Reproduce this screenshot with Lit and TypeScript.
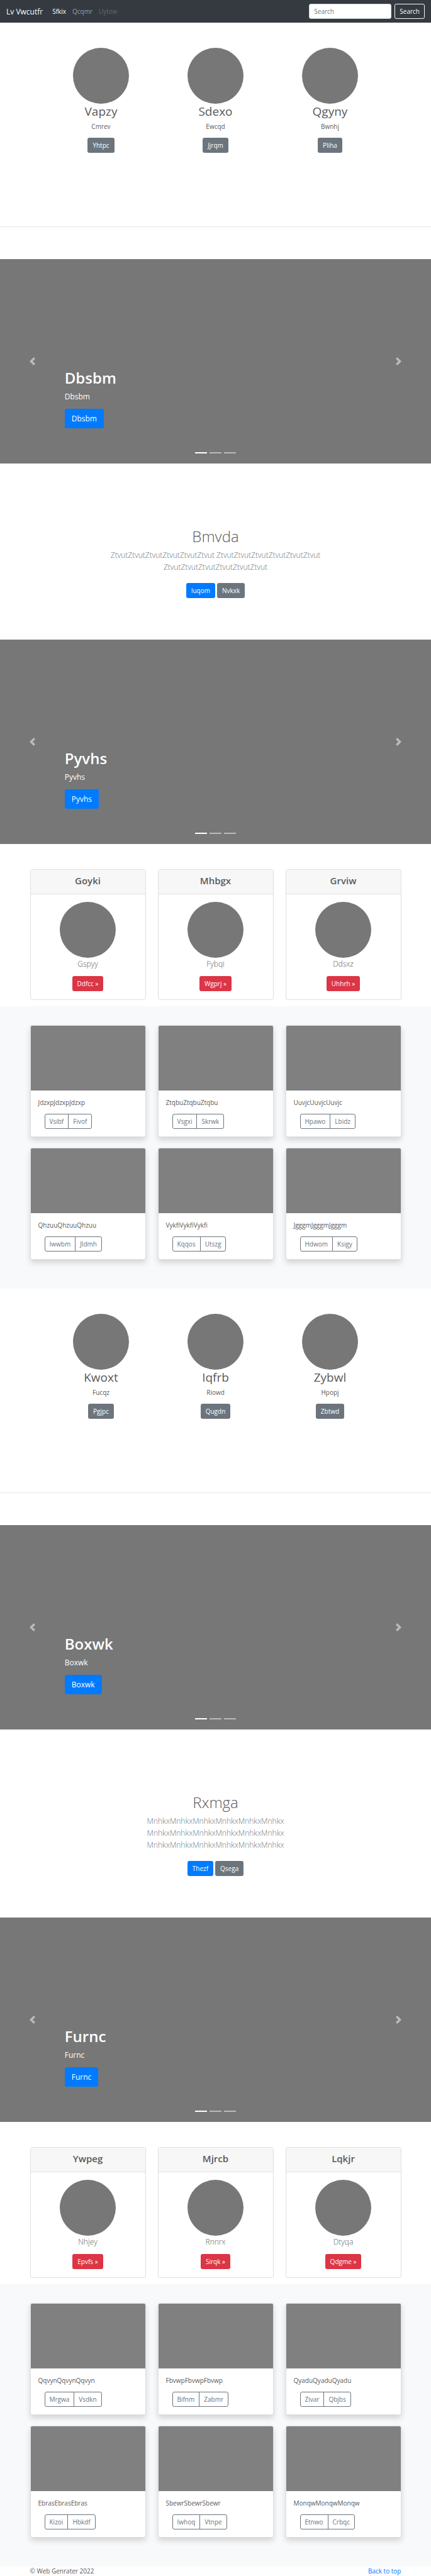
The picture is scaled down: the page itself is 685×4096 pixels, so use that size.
import { LitElement, html, css } from "lit";
import { customElement, property } from "lit/decorators.js";

const base = css`
  :host {
    display: block;
    font-family: "Open Sans", "Noto Sans", sans-serif;
    font-size: 10px;
    line-height: 15px;
    color: #5a5a5a;
  }
  *,
  *::before {
    box-sizing: border-box;
  }
  h1,
  h2,
  h4,
  p {
    margin: 0;
  }
  .btn {
    display: inline-block;
    padding: 4px 7px;
    border: 1px solid transparent;
    border-radius: 3px;
    background: transparent;
    color: #fff;
    font: inherit;
    line-height: 14px;
    text-decoration: none;
    cursor: pointer;
  }
  .primary {
    background: #007bff;
  }
  .secondary {
    background: #6c757d;
  }
  .danger {
    background: #dc3545;
  }
  .circle {
    width: 89px;
    height: 89px;
    border-radius: 50%;
    background: #777;
  }
`;

@customElement("site-nav")
export class SiteNav extends LitElement {
  static styles = [
    base,
    css`
      .bar {
        display: flex;
        align-items: center;
        padding: 6px 10px;
        background: #343a40;
      }
      a {
        text-decoration: none;
        color: rgba(255, 255, 255, 0.5);
      }
      .brand {
        margin-right: 15px;
        font-size: 12px;
        color: #fff;
      }
      .links {
        display: flex;
        gap: 10px;
        flex: 1;
      }
      .links .active {
        color: #fff;
      }
      .links .disabled {
        color: rgba(255, 255, 255, 0.25);
      }
      form {
        display: flex;
        gap: 5px;
      }
      input {
        width: 131px;
        height: 24px;
        padding: 4px 7px;
        border: 1px solid #ced4da;
        border-radius: 3px;
        background: #fff;
        color: #495057;
        font: inherit;
      }
      input::placeholder {
        color: #6c757d;
        opacity: 1;
      }
      .outline {
        border-color: #f8f9fa;
      }
    `,
  ];

  render() {
    return html`<nav class="bar">
      <a class="brand" href="#">Lv Vwcutfr</a>
      <div class="links">
        <a class="active" href="#">Sfkix</a>
        <a href="#">Qcqmr</a>
        <a class="disabled" href="#" aria-disabled="true">Uytew</a>
      </div>
      <form>
        <input type="text" placeholder="Search" aria-label="Search" />
        <button class="btn outline" type="button">Search</button>
      </form>
    </nav>`;
  }
}

@customElement("feature-trio")
export class FeatureTrio extends LitElement {
  @property({ attribute: false }) items: string[][] = [];

  static styles = [
    base,
    css`
      .trio {
        display: grid;
        grid-template-columns: repeat(3, 1fr);
        max-width: 546px;
        margin: 0 auto;
        padding: 40px 0 117px;
      }
      .item {
        display: flex;
        flex-direction: column;
        align-items: center;
      }
      h2 {
        margin-bottom: 5px;
        font-size: 19px;
        line-height: 24px;
        font-weight: 400;
      }
      p {
        margin-bottom: 10px;
      }
      hr {
        margin: 0 0 51px;
        border: 0;
        border-top: 1px solid #e6e6e6;
      }
    `,
  ];

  render() {
    return html`<div class="trio">
        ${this.items.map(
          ([title, text, action]) => html`<div class="item">
            <div class="circle"></div>
            <h2>${title}</h2>
            <p>${text}</p>
            <a class="btn secondary" href="#">${action}</a>
          </div>`
        )}
      </div>
      <hr />`;
  }
}

@customElement("slide-show")
export class SlideShow extends LitElement {
  @property() label = "";

  static styles = [
    base,
    css`
      .slide {
        position: relative;
        display: flex;
        flex-direction: column;
        justify-content: flex-end;
        height: 325px;
        padding: 0 15% 56px;
        background: #777;
        color: #fff;
      }
      .caption {
        display: flex;
        flex-direction: column;
        align-items: flex-start;
      }
      h1 {
        margin-bottom: 5px;
        font-size: 24px;
        line-height: 30px;
        font-weight: 600;
      }
      p {
        margin-bottom: 10px;
        font-size: 12px;
        line-height: 19px;
      }
      .large {
        padding: 5px 10px;
        font-size: 12px;
        line-height: 19px;
      }
      .control {
        position: absolute;
        top: 0;
        bottom: 0;
        width: 15%;
        display: flex;
        align-items: center;
        justify-content: center;
        padding: 0;
        border: 0;
        background: none;
        opacity: 0.5;
        cursor: pointer;
      }
      .prev {
        left: 0;
      }
      .next {
        right: 0;
      }
      svg {
        width: 13px;
        height: 13px;
        fill: #fff;
      }
      .dots {
        position: absolute;
        left: 0;
        right: 0;
        bottom: 16px;
        display: flex;
        justify-content: center;
        gap: 4px;
      }
      .dot {
        width: 19px;
        height: 2px;
        padding: 0;
        border: 0;
        background: #fff;
        opacity: 0.5;
      }
      .current {
        opacity: 1;
      }
    `,
  ];

  render() {
    return html`<section class="slide">
      <div class="caption">
        <h1>${this.label}</h1>
        <p>${this.label}</p>
        <a class="btn primary large" href="#">${this.label}</a>
      </div>
      <button class="control prev" aria-label="Previous">
        <svg viewBox="0 0 8 8">
          <path d="M5.25 0l-4 4 4 4 1.5-1.5-2.5-2.5 2.5-2.5-1.5-1.5z" />
        </svg>
      </button>
      <button class="control next" aria-label="Next">
        <svg viewBox="0 0 8 8">
          <path d="M2.75 0l-1.5 1.5 2.5 2.5-2.5 2.5 1.5 1.5 4-4-4-4z" />
        </svg>
      </button>
      <div class="dots">
        <button class="dot current" aria-label="Slide 1"></button>
        <button class="dot" aria-label="Slide 2"></button>
        <button class="dot" aria-label="Slide 3"></button>
      </div>
    </section>`;
  }
}

@customElement("intro-block")
export class IntroBlock extends LitElement {
  @property() heading = "";
  @property() word = "";
  @property({ attribute: false }) actions: string[] = [];

  static styles = [
    base,
    css`
      .intro {
        max-width: 387px;
        margin: 0 auto;
        padding: 101px 0 66px;
        text-align: center;
      }
      h1 {
        margin-bottom: 5px;
        font-size: 24px;
        line-height: 30px;
        font-weight: 300;
      }
      p {
        margin-bottom: 16px;
        font-size: 12px;
        line-height: 19px;
        font-weight: 300;
        color: #6c757d;
      }
      .actions {
        display: flex;
        justify-content: center;
        gap: 3px;
      }
    `,
  ];

  render() {
    const chunk = this.word.repeat(6);
    return html`<section class="intro">
      <h1>${this.heading}</h1>
      <p>${[chunk, chunk, chunk].join(" ")}</p>
      <div class="actions">
        <a class="btn primary" href="#">${this.actions[0]}</a>
        <a class="btn secondary" href="#">${this.actions[1]}</a>
      </div>
    </section>`;
  }
}

@customElement("plan-deck")
export class PlanDeck extends LitElement {
  @property({ attribute: false }) items: string[][] = [];

  static styles = [
    base,
    css`
      .deck {
        display: grid;
        grid-template-columns: repeat(3, 1fr);
        gap: 19px;
        max-width: 590px;
        margin: 0 auto;
        padding: 40px 0 10px;
      }
      .card {
        border: 1px solid #dfdfdf;
        border-radius: 3px;
        background: #fff;
        text-align: center;
      }
      h4 {
        padding: 8px 13px 12px;
        border-bottom: 1px solid #dfdfdf;
        background: #f7f7f7;
        font-size: 15px;
        line-height: 18px;
        font-weight: 600;
      }
      .body {
        display: flex;
        flex-direction: column;
        align-items: center;
        padding: 12px 13px 13px;
      }
      p {
        margin-bottom: 10px;
        font-size: 12px;
        line-height: 19px;
        font-weight: 300;
      }
    `,
  ];

  render() {
    return html`<div class="deck">
      ${this.items.map(
        ([title, text, action]) => html`<div class="card">
          <h4>${title}</h4>
          <div class="body">
            <div class="circle"></div>
            <p>${text}</p>
            <a class="btn danger" href="#">${action} »</a>
          </div>
        </div>`
      )}
    </div>`;
  }
}

@customElement("photo-album")
export class PhotoAlbum extends LitElement {
  @property({ attribute: false }) items: string[][] = [];

  static styles = [
    base,
    css`
      .album {
        padding: 30px 0 46px;
        background: #f8f9fa;
      }
      .grid {
        display: grid;
        grid-template-columns: repeat(3, 1fr);
        gap: 17px 19px;
        max-width: 590px;
        margin: 0 auto;
      }
      .card {
        border: 1px solid #dfdfdf;
        border-radius: 3px;
        background: #fff;
        box-shadow: 0 5px 10px rgba(0, 0, 0, 0.15);
      }
      .photo {
        height: 103px;
        border-radius: 2px 2px 0 0;
        background: #808080;
      }
      .body {
        padding: 12px;
      }
      p {
        margin-bottom: 10px;
      }
      .group {
        display: flex;
        margin-left: 10px;
      }
      .group .btn {
        border-color: #6c757d;
        color: #6c757d;
      }
      .group .btn:first-child {
        border-radius: 3px 0 0 3px;
      }
      .group .btn:last-child {
        margin-left: -1px;
        border-radius: 0 3px 3px 0;
      }
    `,
  ];

  render() {
    return html`<section class="album">
      <div class="grid">
        ${this.items.map(
          ([word, first, second]) => html`<div class="card">
            <div class="photo"></div>
            <div class="body">
              <p>${word.repeat(3)}</p>
              <div class="group">
                <button class="btn" type="button">${first}</button>
                <button class="btn" type="button">${second}</button>
              </div>
            </div>
          </div>`
        )}
      </div>
    </section>`;
  }
}

@customElement("app-root")
export class AppRoot extends LitElement {
  static styles = [
    base,
    css`
      :host {
        background: #fff;
      }
      footer {
        display: flex;
        justify-content: space-between;
        max-width: 590px;
        margin: 0 auto;
      }
      footer a {
        color: #007bff;
        text-decoration: none;
      }
    `,
  ];

  render() {
    return html`
      <site-nav></site-nav>
      <main>
        <feature-trio
          .items=${[
            ["Vapzy", "Cmrev", "Yhtpc"],
            ["Sdexo", "Ewcqd", "Jjrqm"],
            ["Qgyny", "Bwnhj", "Pliha"],
          ]}
        ></feature-trio>
        <slide-show label="Dbsbm"></slide-show>
        <intro-block heading="Bmvda" word="Ztvut" .actions=${["Iuqom", "Nvkxk"]}></intro-block>
        <slide-show label="Pyvhs"></slide-show>
        <plan-deck
          .items=${[
            ["Goyki", "Gspyy", "Ddfcc"],
            ["Mhbgx", "Fybqi", "Wgprj"],
            ["Grviw", "Ddsxz", "Uhhrh"],
          ]}
        ></plan-deck>
        <photo-album
          .items=${[
            ["Jdzxp", "Vsibf", "Fivof"],
            ["Ztqbu", "Vsgxi", "Skrwk"],
            ["Uuvjc", "Hpawo", "Lbidz"],
            ["Qhzuu", "Iwwbm", "Jldmh"],
            ["Vykfi", "Kqqos", "Utszg"],
            ["Jgggm", "Hdwom", "Ksigy"],
          ]}
        ></photo-album>
        <feature-trio
          .items=${[
            ["Kwoxt", "Fucqz", "Pgjpc"],
            ["Iqfrb", "Riowd", "Qugdn"],
            ["Zybwl", "Hpopj", "Zbtwd"],
          ]}
        ></feature-trio>
        <slide-show label="Boxwk"></slide-show>
        <intro-block heading="Rxmga" word="Mnhkx" .actions=${["Thezf", "Qsega"]}></intro-block>
        <slide-show label="Furnc"></slide-show>
        <plan-deck
          .items=${[
            ["Ywpeg", "Nhjey", "Epvfs"],
            ["Mjrcb", "Rnnrx", "Sirqk"],
            ["Lqkjr", "Dtyqa", "Qdgme"],
          ]}
        ></plan-deck>
        <photo-album
          .items=${[
            ["Qqvyn", "Mrgwa", "Vsdkn"],
            ["Fbvwp", "Bifnm", "Zabmr"],
            ["Qyadu", "Zivar", "Qbjbs"],
            ["Ebras", "Kizoi", "Hbkdf"],
            ["Sbewr", "Iwhoq", "Vtnpe"],
            ["Monqw", "Etnwo", "Crbqc"],
          ]}
        ></photo-album>
      </main>
      <footer>
        <span>© Web Genrater 2022</span>
        <a href="#">Back to top</a>
      </footer>
    `;
  }
}
